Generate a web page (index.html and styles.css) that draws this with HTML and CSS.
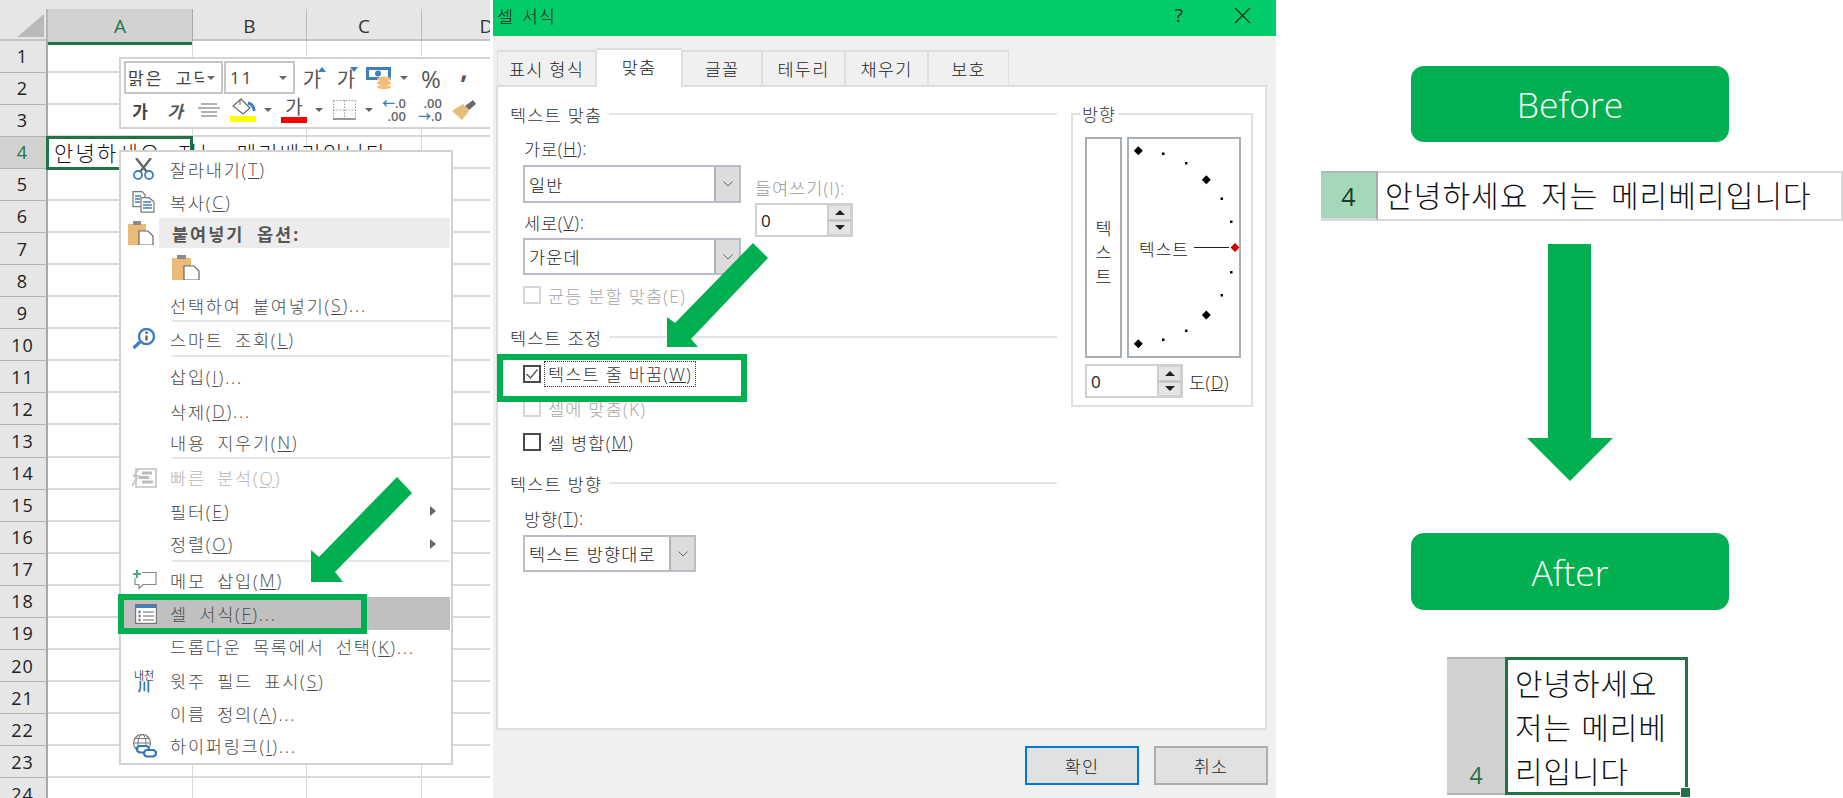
FILE: index.html
```html
<!DOCTYPE html>
<html lang="ko">
<head>
<meta charset="utf-8">
<title>셀 서식 - 텍스트 줄 바꿈</title>
<link rel="stylesheet" href="styles.css">
</head>
<body>
<div class="page">

  <section class="sheet">
    <div class="col-head">
      <div class="corner"><svg width="28" height="23" viewBox="0 0 28 23"><polygon points="27,0 27,23 0,23" fill="#b9b9b9"/></svg></div>
      <div class="ch sel">A</div><div class="ch">B</div><div class="ch">C</div><div class="ch">D</div>
    </div>
    <div class="row"><div class="rh">1</div><div class="cells"></div></div>
    <div class="row"><div class="rh">2</div><div class="cells"></div></div>
    <div class="row"><div class="rh">3</div><div class="cells"></div></div>
    <div class="row"><div class="rh cur">4</div><div class="cells"><div class="active">안녕하세요 저는 메리베리입니다</div></div></div>
    <div class="row"><div class="rh">5</div><div class="cells"></div></div>
    <div class="row"><div class="rh">6</div><div class="cells"></div></div>
    <div class="row"><div class="rh">7</div><div class="cells"></div></div>
    <div class="row"><div class="rh">8</div><div class="cells"></div></div>
    <div class="row"><div class="rh">9</div><div class="cells"></div></div>
    <div class="row"><div class="rh">10</div><div class="cells"></div></div>
    <div class="row"><div class="rh">11</div><div class="cells"></div></div>
    <div class="row"><div class="rh">12</div><div class="cells"></div></div>
    <div class="row"><div class="rh">13</div><div class="cells"></div></div>
    <div class="row"><div class="rh">14</div><div class="cells"></div></div>
    <div class="row"><div class="rh">15</div><div class="cells"></div></div>
    <div class="row"><div class="rh">16</div><div class="cells"></div></div>
    <div class="row"><div class="rh">17</div><div class="cells"></div></div>
    <div class="row"><div class="rh">18</div><div class="cells"></div></div>
    <div class="row"><div class="rh">19</div><div class="cells"></div></div>
    <div class="row"><div class="rh">20</div><div class="cells"></div></div>
    <div class="row"><div class="rh">21</div><div class="cells"></div></div>
    <div class="row"><div class="rh">22</div><div class="cells"></div></div>
    <div class="row"><div class="rh">23</div><div class="cells"></div></div>
    <div class="row"><div class="rh">24</div><div class="cells"></div></div>

    <div class="mini">
      <div class="mini-r1">
        <div class="mcombo w99"><span class="clip">맑은 고딕</span><i class="tri"></i></div>
        <div class="mcombo w71"><span class="size">11</span><i class="tri"></i></div>
        <div class="slot"><span class="mg">가</span><i class="up"></i></div>
        <div class="slot"><span class="mg">가</span><i class="dn"></i></div>
        <div class="slot"><svg width="26" height="22" viewBox="0 0 26 22"><rect x="0" y="0" width="25" height="13" fill="#3f7fbf"/><rect x="3" y="3" width="19" height="7" fill="#fff"/><circle cx="12" cy="6.500" r="3" fill="#3f7fbf"/><ellipse cx="18" cy="12" rx="7" ry="2.500" fill="#eebf7c"/><ellipse cx="18" cy="16" rx="7" ry="2.500" fill="#eebf7c"/><ellipse cx="18" cy="20" rx="7" ry="2" fill="#eebf7c"/></svg></div>
        <div class="slot"><i class="tri"></i></div>
        <div class="slot pct">%</div>
        <div class="slot comma">,</div>
      </div>
      <div class="mini-r2">
        <div class="slot mbold">가</div>
        <div class="slot mital">가</div>
        <div class="slot"><svg width="22" height="14" viewBox="0 0 22 14"><path d="M3 1h16M0 5h22M3 9h16M3 13h16" stroke="#666" stroke-width="1.200" fill="none"/></svg></div>
        <div class="slot stack"><svg width="26" height="17" viewBox="0 0 26 17"><path d="M11 1l9 9-7 6-10-8z" fill="#fff" stroke="#666" stroke-width="1.200"/><path d="M10 1v6" stroke="#666"/><path d="M18 5c4 1 6 3 6 8" stroke="#3f7fbf" stroke-width="3" fill="none"/></svg><b class="bar yellow"></b></div>
        <div class="slot"><i class="tri"></i></div>
        <div class="slot stack"><span class="mg2">가</span><b class="bar red"></b></div>
        <div class="slot"><i class="tri"></i></div>
        <div class="slot"><svg width="23" height="20" viewBox="0 0 23 20"><path d="M.5.500h22M.5 10h22M.5.500v19M11.500.500v19M22.500.500v19" stroke="#999" stroke-dasharray="1.500 1.500" fill="none"/><path d="M0 19h23" stroke="#777" stroke-width="1.500"/></svg></div>
        <div class="slot"><i class="tri"></i></div>
        <div class="slot"><div class="dec"><span><em>←</em>.0</span><span>.00</span></div></div>
        <div class="slot"><div class="dec"><span>.00</span><span><em>→</em>.0</span></div></div>
        <div class="slot"><svg width="24" height="20" viewBox="0 0 24 20"><path d="M0 11l11-7 6 7-7 9z" fill="#e6bc78"/><path d="M13 6l8-6 3 4-7 6z" fill="#6b6b6b"/></svg></div>
      </div>
    </div>

    <div class="menu">
      <div class="mi h34"><span class="ic"><svg width="24" height="22" viewBox="0 0 24 22"><path d="M4 0l11 14M19 0L8 14" stroke="#666" stroke-width="2.400" fill="none"/><circle cx="6" cy="17" r="4" fill="#fff" stroke="#3f7fbf" stroke-width="1.800"/><circle cx="17" cy="17" r="4" fill="#fff" stroke="#3f7fbf" stroke-width="1.800"/></svg></span>잘라내기(<u>T</u>)</div>
      <div class="mi h32"><span class="ic"><svg width="24" height="22" viewBox="0 0 24 22"><path d="M1 .7h9l3 3v12H1z" fill="#fff" stroke="#777" stroke-width="1.200"/><path d="M9 6.700h8l5 4v10.500H9z" fill="#fff" stroke="#777" stroke-width="1.200"/><path d="M3 5h6M3 8h5M3 11h5M11 11h8M11 14h9M11 17h9" stroke="#3f7fbf" stroke-width="1.300"/></svg></span>복사(<u>C</u>)</div>
      <div class="mhead-row h30">
        <span class="head-ic"><svg width="26" height="24" viewBox="0 0 26 24"><path d="M0 3h5V0h8v3h5v21H0z" fill="#e8bb78"/><rect x="5" y="0" width="8" height="4" fill="#8b8b8b"/><path d="M11 10h9l5 5v9H11z" fill="#fff" stroke="#666" stroke-width="1.200"/></svg></span>
        <div class="mhead">붙여넣기 옵션:</div>
      </div>
      <div class="mi h42 pasteicon"><svg width="28" height="26" viewBox="0 0 28 26"><path d="M0 4h5V1h9v3h5v22H0z" fill="#e8bb78"/><rect x="5" y="1" width="9" height="4" fill="#8b8b8b"/><path d="M12 12h10l5 5v9H12z" fill="#fff" stroke="#666" stroke-width="1.200"/></svg></div>
      <div class="mi h30 nopad">선택하여 붙여넣기(<u>S</u>)...</div>
      <div class="sep"></div>
      <div class="mi h32"><span class="ic"><svg width="24" height="22" viewBox="0 0 24 22"><circle cx="14.500" cy="8.500" r="7.500" fill="#fff" stroke="#3f7fbf" stroke-width="2.400"/><path d="M8 14l-6.500 6" stroke="#3f7fbf" stroke-width="3.200"/><path d="M14.500 7.500v5" stroke="#555" stroke-width="2.200"/><circle cx="14.500" cy="4.800" r="1.300" fill="#555"/></svg></span>스마트 조회(<u>L</u>)</div>
      <div class="sep"></div>
      <div class="mi h37 nopad">삽입(<u>I</u>)...</div>
      <div class="mi h32 nopad">삭제(<u>D</u>)...</div>
      <div class="mi h30 nopad">내용 지우기(<u>N</u>)</div>
      <div class="sep"></div>
      <div class="mi h35 off"><span class="ic"><svg width="25" height="20" viewBox="0 0 25 20"><rect x="4" y="1" width="20" height="18" fill="#fff" stroke="#c4c4c4" stroke-width="1.600"/><path d="M10 5h10M7 9.500h10M10 14h11" stroke="#bcbcbc" stroke-width="3"/><path d="M7 0L2 8h4L0 18" fill="none" stroke="#c9c9c9" stroke-width="2"/></svg></span>빠른 분석(<u>Q</u>)</div>
      <div class="mi h32 nopad">필터(<u>E</u>)<i class="sub"></i></div>
      <div class="mi h33 nopad">정렬(<u>O</u>)<i class="sub"></i></div>
      <div class="sep"></div>
      <div class="mi h34"><span class="ic"><svg width="25" height="20" viewBox="0 0 25 20"><path d="M10 2.500h14v12H11l-4 4v-4H3V8" fill="none" stroke="#8a8a8a" stroke-width="1.200"/><path d="M5 0v8M1 4h8" stroke="#4fa582" stroke-width="2"/></svg></span>메모 삽입(<u>M</u>)</div>
      <div class="mi h33 picked"><span class="ic"><svg width="22" height="20" viewBox="0 0 22 20"><rect x=".6" y=".6" width="20.800" height="18.800" fill="#fff" stroke="#777" stroke-width="1.200"/><rect x="1" y="1" width="20" height="3" fill="#3f7fbf"/><path d="M8 8h11M8 12h11M8 16h11" stroke="#666" stroke-width="1.200"/><circle cx="4.500" cy="8" r="1.400" fill="#888"/><circle cx="4.500" cy="12" r="1.400" fill="#888"/><circle cx="4.500" cy="16" r="1.400" fill="#888"/></svg></span>셀 서식(<u>F</u>)...</div>
      <div class="mi h33 nopad">드롭다운 목록에서 선택(<u>K</u>)...</div>
      <div class="mi h35"><span class="ic ruby"><span class="ruby-top">내천</span><span class="ruby-low">川</span></span>윗주 필드 표시(<u>S</u>)</div>
      <div class="mi h31 nopad">이름 정의(<u>A</u>)...</div>
      <div class="mi h33"><span class="ic"><svg width="25" height="24" viewBox="0 0 25 24"><circle cx="10" cy="9" r="8.500" fill="#fff" stroke="#777" stroke-width="1.200"/><ellipse cx="10" cy="9" rx="4" ry="8.500" fill="none" stroke="#777"/><path d="M1.500 9h17M3 4.500h14M3 13.500h14" stroke="#777"/><rect x="5" y="12" width="12" height="6.500" rx="3.200" fill="#fff" stroke="#2f75b5" stroke-width="2.200"/><rect x="12" y="16" width="12" height="6.500" rx="3.200" fill="#fff" stroke="#2f75b5" stroke-width="2.200"/></svg></span>하이퍼링크(<u>I</u>)...</div>
    </div>
  </section>

  <section class="dialog">
    <header class="title">
      <span class="title-text">셀 서식</span>
      <span class="help">?</span>
      <svg class="close" width="17" height="17" viewBox="0 0 17 17"><path d="M1 1l15 15M16 1L1 16" stroke="#222" stroke-width="1.100"/></svg>
    </header>
    <nav class="tabs">
      <div class="tab t99">표시 형식</div>
      <div class="tab on">맞춤</div>
      <div class="tab t80">글꼴</div>
      <div class="tab t83">테두리</div>
      <div class="tab t83">채우기</div>
      <div class="tab t81">보호</div>
    </nav>
    <div class="panel">
      <div class="left">
        <div class="gt">텍스트 맞춤</div>
        <div class="align">
          <div class="align-l">
            <div class="lb first">가로(<u>H</u>):</div>
            <div class="combo c218 tall"><span>일반</span><i class="cb"><svg width="10" height="6" viewBox="0 0 10 6"><path d="M.5.500L5 5 9.500.5" fill="none" stroke="#666"/></svg></i></div>
            <div class="lb mid">세로(<u>V</u>):</div>
            <div class="combo c218"><span>가운데</span><i class="cb"><svg width="10" height="6" viewBox="0 0 10 6"><path d="M.5.500L5 5 9.500.5" fill="none" stroke="#666"/></svg></i></div>
          </div>
          <div class="align-r">
            <div class="lb grey">들여쓰기(I):</div>
            <div class="spin"><span>0</span><div class="sb"><i><b class="a-up"></b></i><i><b class="a-dn"></b></i></div></div>
          </div>
        </div>
        <div class="chk grey c1"><i class="box dis"></i>균등 분할 맞춤(E)</div>
        <div class="gt g2">텍스트 조정</div>
        <div class="chk c2"><i class="box"><svg width="14" height="12" viewBox="0 0 14 12"><path d="M1.500 6l4 4 7-8.500" fill="none" stroke="#555" stroke-width="1.300"/></svg></i><span class="focus">텍스트 줄 바꿈(<u>W</u>)</span></div>
        <div class="chk grey c3"><i class="box dis"></i>셀에 맞춤(K)</div>
        <div class="chk c3"><i class="box"></i>셀 병합(<u>M</u>)</div>
        <div class="gt g3">텍스트 방향</div>
        <div class="lb dirl">방향(<u>T</u>):</div>
        <div class="combo c173"><span>텍스트 방향대로</span><i class="cb"><svg width="10" height="6" viewBox="0 0 10 6"><path d="M.5.500L5 5 9.500.5" fill="none" stroke="#666"/></svg></i></div>
      </div>
      <fieldset class="orient">
        <legend>방향</legend>
        <div class="orient-boxes">
          <div class="vbox"><span>텍</span><span>스</span><span>트</span></div>
          <div class="dial">
            <svg width="114" height="221" viewBox="0 0 114 221">
              <g fill="#000">
                <polygon points="11.300,9.200 15.800,13.700 11.300,18.200 6.800,13.700"/>
                <polygon points="79.300,38.200 83.800,42.700 79.300,47.200 74.800,42.700"/>
                <polygon points="79.300,173.500 83.800,178 79.300,182.500 74.800,178"/>
                <polygon points="11.300,202.200 15.800,206.700 11.300,211.200 6.800,206.700"/>
                <rect x="35" y="15.500" width="2.500" height="2.500"/><rect x="58" y="25" width="2.500" height="2.500"/>
                <rect x="93.500" y="60.500" width="2.500" height="2.500"/><rect x="103" y="83.500" width="2.500" height="2.500"/>
                <rect x="103" y="134" width="2.500" height="2.500"/><rect x="93.500" y="157" width="2.500" height="2.500"/>
                <rect x="58" y="192.500" width="2.500" height="2.500"/><rect x="35" y="201.500" width="2.500" height="2.500"/>
              </g>
              <path d="M67 110.500h35" stroke="#222" stroke-width="1"/>
              <polygon points="108,106 112.500,110.500 108,115 103.500,110.500" fill="#d00000"/>
            </svg>
            <span class="dial-text">텍스트</span>
          </div>
        </div>
        <div class="orient-spin">
          <div class="spin s98"><span>0</span><div class="sb"><i><b class="a-up"></b></i><i><b class="a-dn"></b></i></div></div>
          <span class="deg">도(<u>D</u>)</span>
        </div>
      </fieldset>
    </div>
    <footer class="foot">
      <button class="btn ok">확인</button>
      <button class="btn">취소</button>
    </footer>
  </section>

  <section class="compare">
    <div class="pill first-pill">Before</div>
    <div class="before">
      <div class="before-h">4</div>
      <div class="before-c">안녕하세요 저는 메리베리입니다</div>
    </div>
    <svg class="down" width="86" height="237" viewBox="0 0 86 237"><polygon points="21,0 64,0 64,194 86,194 43,237 0,194 21,194" fill="#00b050"/></svg>
    <div class="pill">After</div>
    <div class="after">
      <div class="after-h">4</div>
      <div class="after-c">안녕하세요<br>저는 메리베<br>리입니다</div>
    </div>
  </section>

  <div class="mark mark-menu"></div>
  <div class="mark mark-wrap"></div>
  <svg class="arrow arrow-a" width="101" height="105" viewBox="0 0 101 105"><polygon points="86,0 101,16 24,95 32,105 0,105 0,73 8,80" fill="#00b050"/></svg>
  <svg class="arrow arrow-b" width="101" height="104" viewBox="0 0 101 104"><polygon points="86,0 101,15 24,96 31,104 0,104 0,74 8,80" fill="#00b050"/></svg>
</div>
</body>
</html>
```

FILE: styles.css
```css
* { box-sizing: border-box; }
html, body { margin: 0; padding: 0; background: #fff; overflow: hidden; }
body { font-family: "Open Sans", "Noto Sans CJK KR", sans-serif; color: #222; font-weight: 300; }
.page { position: relative; display: flex; width: 1843px; height: 798px; overflow: hidden; }

/* ---------- spreadsheet ---------- */
.sheet { position: relative; width: 490px; height: 798px; overflow: hidden; flex: none; }
.col-head { display: grid; grid-template-columns: 48px 145px 114px 115px 130px; height: 40.5px; background: #e6e6e6; border-bottom: 2px solid #c4c4c4; }
.corner { padding: 5px 0 0 17px; border-right: 2px solid #b5b5b5; margin-top: 9px; }
.ch { margin-top: 9px; display: flex; align-items: center; justify-content: center; font-size: 19px; color: #333; font-weight: 400; border-right: 1px solid #bdbdbd; }
.ch.sel { background: #d2d2d2; color: #217346; position: relative; box-shadow: 0 3px 0 #217346; border-right: 1px solid #aaa; }
.row { display: grid; grid-template-columns: 48px 1fr; height: 32.08px; }
.rh { background: #e6e6e6; border-right: 2px solid #a9a9a9; border-bottom: 1px solid #b4b4b4; display: flex; align-items: center; justify-content: center; font-size: 18px; font-weight: 400; letter-spacing: 1px; color: #222; padding-right: 1px; }
.rh.cur { background: #d2d2d2; color: #217346; }
.cells { position: relative; border-bottom: 2px solid #d9d9d9; background-image: linear-gradient(#d9d9d9, #d9d9d9), linear-gradient(#d9d9d9, #d9d9d9), linear-gradient(#d9d9d9, #d9d9d9); background-size: 1px 100%; background-repeat: no-repeat; background-position: 144px 0, 258px 0, 373px 0; }
.active { position: absolute; left: -2px; top: -1px; width: 147px; height: 34px; border: 3px solid #217346; background: #fff; white-space: nowrap; font-size: 21px; line-height: 26px; letter-spacing: 2.200px; word-spacing: 8px; padding-left: 5px; color: #111; font-family: "Noto Sans CJK KR", sans-serif; }

/* mini toolbar */
.mini { position: absolute; left: 119px; top: 57px; width: 390px; height: 72px; background: #fff; border: 2px solid #d4d4d4; padding: 2px 0 0 3px; color: #444; }
.mini-r1 { display: grid; grid-template-columns: 99px 71px 36px 32px 34px 16px 38px 28px; height: 33px; }
.mini-r2 { display: grid; grid-template-columns: 30px 40px 28px 40px 10px 42px 8px 42px 8px 42px 30px 38px; height: 32px; margin-left: 1px; }
.mcombo { border: 2px solid #c6c6c6; height: 33px; display: flex; align-items: center; justify-content: space-between; padding: 0 3px 0 4px; font-size: 17px; overflow: hidden; }
.mcombo.w99 { width: 99px; padding-left: 2px; }
.mcombo.w71 { width: 71px; margin-left: 1px; }
.clip { width: 76px; overflow: hidden; white-space: nowrap; letter-spacing: 2px; word-spacing: 6px; font-size: 17px; font-weight: 400; }
.size { letter-spacing: 2px; font-weight: 400; }
.slot { position: relative; display: flex; align-items: center; justify-content: center; }
.stack { flex-direction: column; gap: 1px; }
.tri { display: block; width: 0; height: 0; border: 4.500px solid transparent; border-top: 4px solid #666; border-bottom: 0; }
.mcombo .tri { margin-right: 3px; }
.mg { font-size: 20px; color: #555; font-weight: 400; }
.up, .dn { position: absolute; right: 4px; top: 6px; width: 0; height: 0; border: 4px solid transparent; }
.up { border-bottom: 5px solid #3f7fbf; border-top: 0; }
.dn { border-top: 5px solid #3f7fbf; border-bottom: 0; }
.pct { font-size: 24px; color: #555; font-weight: 400; }
.comma { font-size: 26px; font-weight: 700; color: #555; line-height: 16px; padding-bottom: 18px; }
.mbold { font-size: 17px; font-weight: 700; color: #444; }
.mital { font-size: 17px; font-weight: 700; color: #555; font-style: italic; }
.mg2 { font-size: 19px; line-height: 18px; color: #555; font-weight: 400; }
.bar { display: block; width: 26px; height: 6px; }
.yellow { background: #ffff00; }
.red { background: #ff0000; }
.dec { display: flex; flex-direction: column; align-items: flex-end; font-size: 13px; line-height: 13px; color: #666; font-weight: 600; }
.dec em { font-style: normal; color: #3f7fbf; font-weight: 700; }

/* context menu */
.menu { position: absolute; left: 119px; top: 150px; width: 334px; height: 615px; background: #fff; border: 2px solid #d2d2d2; }
.mi { display: flex; align-items: center; position: relative; font-size: 17.500px; letter-spacing: 1.800px; word-spacing: 5px; color: #4a4a4a; white-space: pre; }
.mi u { text-underline-offset: 2px; }
.nopad { padding-left: 49px; }
.ic { width: 49px; flex: none; display: flex; justify-content: center; padding-right: 3px; align-items: center; }
.h30 { height: 30px; } .h31 { height: 31px; } .h32 { height: 32px; } .h33 { height: 33px; } .h34 { height: 34px; } .h35 { height: 35px; } .h37 { height: 37px; } .h42 { height: 42px; }
.mhead-row { display: flex; }
.head-ic { width: 38px; flex: none; padding: 3px 0 0 7px; }
.mhead { flex: 1; display: flex; align-items: center; margin-right: 1px; padding-left: 13px; background: #ececec; font-size: 17.500px; letter-spacing: 2px; word-spacing: 6px; font-weight: 700; color: #555; }
.pasteicon { padding-left: 51px; align-items: flex-start; padding-top: 6px; }
.sep { height: 3px; margin-left: 51px; margin-right: 1px; border-top: 2px solid #e6e6e6; }
.off { color: #b5b5b5; }
.sub { position: absolute; right: 15px; top: 50%; margin-top: -5px; width: 0; height: 0; border: 5px solid transparent; border-left: 6px solid #666; border-right: 0; }
.picked { background: #c0c0c0; margin: 0 1px 0 3px; }
.picked .ic { width: 46px; }
.ruby { flex-direction: column; line-height: 11px; }
.ruby-top { font-size: 11px; letter-spacing: 0; color: #555; font-weight: 400; }
.ruby-low { font-size: 13px; letter-spacing: 0; color: #2f75b5; font-weight: 700; }

/* ---------- dialog ---------- */
.dialog { width: 783px; height: 798px; margin-left: 3px; background: #f0f0f0; flex: none; display: flex; flex-direction: column; }
.title { height: 36px; background: #00cc6a; display: flex; align-items: center; padding: 0 25px 6px 4px; flex: none; }
.title-text { font-size: 17.500px; letter-spacing: 1px; word-spacing: 2px; color: #222; flex: 1; }
.help { font-size: 19px; margin-right: 51px; color: #222; font-weight: 400; }
.tabs { display: flex; padding: 12px 0 0 4px; height: 49px; flex: none; position: relative; z-index: 1; }
.tab { height: 35px; margin-top: 2px; background: #f0f0f0; border: 2px solid #dedede; border-bottom: 0; border-left-width: 1px; border-right-width: 1px; display: flex; align-items: center; justify-content: center; font-size: 17.500px; letter-spacing: 1.200px; color: #222; }
.t99 { width: 99px; } .t80 { width: 80px; } .t83 { width: 83px; } .t81 { width: 81px; }
.tab.on { width: 86px; height: 39px; margin-top: 0; background: #fff; border-bottom: 0; padding-bottom: 4px; }
.panel { width: 771px; height: 645px; margin-left: 3px; background: #fff; border: 2px solid #dedede; display: flex; padding: 15px 0 0 12px; flex: none; }
.left { width: 547px; flex: none; }
.gt { display: flex; align-items: center; height: 24px; gap: 7px; font-size: 17.500px; letter-spacing: 1.200px; color: #333; white-space: nowrap; }
.gt::after { content: ""; flex: 1; height: 2px; background: #e4e4e4; }
.g2 { margin-top: 18px; }
.g3 { margin-top: 17px; }
.lb { height: 24px; display: flex; align-items: center; font-size: 17.500px; letter-spacing: .8px; color: #333; white-space: pre; }
.lb.first { margin: 10px 0 5px; }
.lb.mid { margin: 7px 0 4px; }
.lb.grey { color: #999; margin-bottom: 4px; font-size: 17.500px; letter-spacing: 1px; }
.dirl { margin: 11px 0 5px 14px; }
.align { display: flex; padding-left: 13px; }
.align-l { width: 218px; flex: none; }
.align-l .lb { margin-left: 1px; }
.align-r { margin-left: 14px; padding-top: 49px; }
.combo { height: 37px; border: 2px solid #bcbcc6; display: flex; align-items: center; justify-content: space-between; font-size: 17.500px; letter-spacing: 1.200px; color: #222; background: #fff; }
.combo span { padding-left: 4px; white-space: nowrap; }
.combo.tall { height: 38px; }
.c218 { width: 218px; }
.c173 { width: 173px; margin-left: 13px; }
.cb { width: 25px; height: 100%; background: #dcdcdc; border-left: 2px solid #b3b3b3; display: flex; align-items: center; justify-content: center; flex: none; }
.spin { width: 98px; height: 34px; border: 2px solid #d0d0d0; display: flex; justify-content: space-between; align-items: center; font-size: 17px; font-weight: 400; color: #222; background: #fff; }
.spin > span { padding-left: 4px; }
.sb { width: 24px; height: 100%; display: flex; flex-direction: column; gap: 1px; background: #bbb; border-left: 1px solid #ccc; }
.sb i { flex: 1; background: #e5e5e5; border: 1px solid #d0d0d0; display: flex; align-items: center; justify-content: center; }
.a-up, .a-dn { width: 0; height: 0; border: 5px solid transparent; }
.a-up { border-bottom: 5px solid #222; border-top: 0; }
.a-dn { border-top: 5px solid #222; border-bottom: 0; }
.chk { display: flex; align-items: center; height: 24px; padding-left: 13px; font-size: 17.500px; letter-spacing: 1.200px; color: #333; white-space: pre; }
.chk.grey { color: #a6a6a6; }
.c1 { margin-top: 8px; }
.c2 { margin-top: 13px; }
.c3 { margin-top: 10px; }
.box { width: 18px; height: 18px; border: 2px solid #4a4a4a; margin-right: 7px; flex: none; display: flex; align-items: center; justify-content: center; }
.box.dis { border-color: #d6d6d6; }
.focus { outline: 1px dotted #333; margin-left: -3px; padding: 0 3px; line-height: 24px; }

/* orientation */
.orient { width: 182px; height: 305px; margin: 0 0 0 14px; padding: 0 0 0 12px; border: 2px solid #e0e0e0; flex: none; }
.orient legend { margin-left: -5px; padding: 0 2px; height: 24px; font-size: 17.500px; letter-spacing: .8px; color: #333; line-height: 24px; }
.orient-boxes { display: flex; gap: 5px; margin-top: 11px; }
.vbox { width: 37px; height: 221px; border: 2px solid #a8b0b6; display: flex; flex-direction: column; align-items: center; justify-content: center; font-size: 17.500px; line-height: 24px; color: #222; padding-top: 8px; }
.dial { position: relative; width: 114px; height: 221px; border: 2px solid #a8b0b6; }
.dial svg { position: absolute; left: -2px; top: -2px; }
.dial-text { position: absolute; left: 10px; top: 99px; font-size: 17px; letter-spacing: 1px; line-height: 24px; color: #222; }
.orient-spin { display: flex; align-items: center; margin-top: 6px; }
.s98 { flex: none; }
.deg { margin-left: 6px; font-size: 17.500px; letter-spacing: .5px; color: #222; }
.foot { display: flex; justify-content: flex-end; gap: 15px; padding: 16px 8px 0 0; }
.btn { width: 114px; height: 39px; background: #e1e1e1; border: 2px solid #adadad; font-family: inherit; font-weight: 300; font-size: 17.500px; letter-spacing: 1.200px; color: #222; padding: 0; }
.btn.ok { border-color: #0078d7; }

/* ---------- before / after ---------- */
.compare { flex: 1; padding-top: 66px; }
.pill { width: 318px; height: 76px; margin-left: 135px; background: #00b050; border-radius: 13px; color: #fff; font-size: 35.500px; font-weight: 300; display: flex; align-items: center; justify-content: center; font-family: "Open Sans", sans-serif; }
.before { display: flex; margin: 29px 0 0 45px; height: 50px; }
.before-h { width: 57px; background: #a3d9b9; border-top: 2px solid #b5b5b5; border-bottom: 3px solid #d9d9d9; border-right: 2px solid #a9a9a9; display: flex; align-items: center; justify-content: center; font-size: 25px; font-weight: 400; color: #1d3a2a; }
.before-c { flex: 1; border: 2px solid #d9d9d9; border-left: 0; font-size: 30px; letter-spacing: 1.100px; word-spacing: 3px; line-height: 43px; padding-left: 7px; color: #111; white-space: nowrap; font-family: "Noto Sans CJK KR", sans-serif; }
.down { display: block; margin: 23px 0 0 251px; }
.down + .pill { margin-top: 52px; height: 77px; }
.after { display: flex; margin: 47px 0 0 171px; height: 138px; width: 245px; }
.after-h { width: 58px; background: #d2d2d2; border-top: 2px solid #b5b5b5; border-bottom: 2px solid #b5b5b5; display: flex; align-items: flex-end; justify-content: center; font-size: 23px; font-weight: 400; color: #217346; padding-bottom: 2px; }
.after-c { position: relative; width: 183px; border: 3px solid #217346; padding-left: 7px; font-size: 30px; line-height: 44px; letter-spacing: .9px; color: #111; font-family: "Noto Sans CJK KR", sans-serif; white-space: nowrap; }
.after-c::after { content: ""; position: absolute; right: -6px; bottom: -6px; width: 9px; height: 9px; background: #217346; border: 1px solid #fff; }

/* ---------- overlays ---------- */
.mark { position: absolute; border: 6px solid #00b050; }
.mark-menu { left: 118px; top: 594px; width: 249px; height: 40px; }
.mark-wrap { left: 497px; top: 354px; width: 250px; height: 48px; }
.arrow { position: absolute; }
.arrow-a { left: 311px; top: 477px; }
.arrow-b { left: 667px; top: 243px; }
```
